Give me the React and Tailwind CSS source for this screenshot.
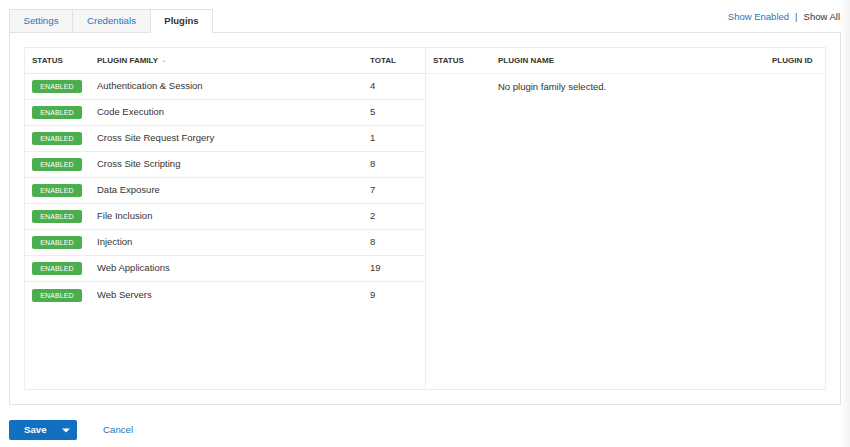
import React from "react";

const families = [
  ["Authentication & Session", 4],
  ["Code Execution", 5],
  ["Cross Site Request Forgery", 1],
  ["Cross Site Scripting", 8],
  ["Data Exposure", 7],
  ["File Inclusion", 2],
  ["Injection", 8],
  ["Web Applications", 19],
  ["Web Servers", 9],
];

function Badge() {
  return (
    <span className="inline-flex items-center justify-center w-[50px] h-[13px] rounded-[2px] bg-[#4cae4c] text-white text-[7px] leading-none tracking-[0.1px]">
      ENABLED
    </span>
  );
}

export default function App() {
  return (
    <div
      className="w-[850px] h-[447px] bg-white flex text-[#333]"
      style={{ fontFamily: '"Liberation Sans", Arial, sans-serif' }}
    >
      <div className="w-[841px] pl-[9px] pt-[9px] flex flex-col">
        {/* top bar */}
        <div className="flex items-start justify-between h-[23px]">
          <div className="flex h-[24px] relative z-10">
            <div className="w-[64px] h-[23px] flex items-center justify-center bg-[#f6f6f6] border border-[#e2e2e2] border-b-0 text-[9.7px] text-[#2a75b8]">
              Settings
            </div>
            <div className="w-[78px] h-[23px] flex items-center justify-center bg-[#f6f6f6] border border-l-0 border-[#e2e2e2] border-b-0 text-[9.7px] text-[#2a75b8]">
              Credentials
            </div>
            <div className="w-[62px] h-[24px] flex items-center justify-center bg-white border border-l-0 border-[#e2e2e2] border-b-0 text-[9.5px] font-bold text-[#333] pb-px">
              Plugins
            </div>
          </div>
          <div className="flex items-center h-[9px] mt-[4px] text-[9.5px] pr-px">
            <span className="text-[#2a75b8]">Show Enabled</span>
            <span className="mx-[6px] text-[#555]">|</span>
            <span className="text-[#333]">Show All</span>
          </div>
        </div>

        {/* panel */}
        <div className="h-[373px] border border-[#e2e2e2] p-[14px]">
          <div className="h-[343px] border border-[#ececec] flex">
            {/* left table */}
            <div className="w-[401px] border-r border-[#ececec] flex flex-col">
              <div className="h-[26px] flex items-center border-b border-[#ececec] pl-[7px] text-[8px] font-bold">
                <span className="w-[65px]">STATUS</span>
                <span className="w-[273px] flex items-center">
                  PLUGIN FAMILY
                  <span className="ml-[4px] text-[4px] text-[#bbb]">▲</span>
                </span>
                <span>TOTAL</span>
              </div>
              <div className="flex flex-col divide-y divide-[#ededed]">
                {families.map(([name, total]) => (
                  <div key={name} className="h-[26px] flex items-center pl-[7px] text-[9.5px]">
                    <span className="w-[65px] flex">
                      <Badge />
                    </span>
                    <span className="w-[273px]">{name}</span>
                    <span>{total}</span>
                  </div>
                ))}
              </div>
            </div>
            {/* right table */}
            <div className="flex-1 flex flex-col">
              <div className="h-[26px] flex items-center border-b border-[#f0f0f0] pl-[7px] text-[8px] font-bold">
                <span className="w-[65px]">STATUS</span>
                <span className="w-[274px]">PLUGIN NAME</span>
                <span>PLUGIN ID</span>
              </div>
              <div className="h-[26px] flex items-center pl-[7px] text-[9.5px]">
                <span className="w-[65px]"></span>
                <span>No plugin family selected.</span>
              </div>
            </div>
          </div>
        </div>

        {/* footer */}
        <div className="flex items-center mt-[15px]">
          <div className="w-[68px] h-[20px] rounded-[2px] bg-[#136fc0] flex items-center text-white">
            <span className="pl-[15px] w-[52px] text-[9.7px] font-bold">Save</span>
            <svg width="8" height="5" viewBox="0 0 8 5" className="ml-[1px]">
              <path d="M0 0.5 H8 L4 4.5 Z" fill="white" />
            </svg>
          </div>
          <span className="ml-[26px] text-[9.7px] text-[#2a75b8]">Cancel</span>
        </div>
      </div>
      <div className="flex-1 bg-gradient-to-r from-white to-[#f2f2f2]"></div>
    </div>
  );
}
